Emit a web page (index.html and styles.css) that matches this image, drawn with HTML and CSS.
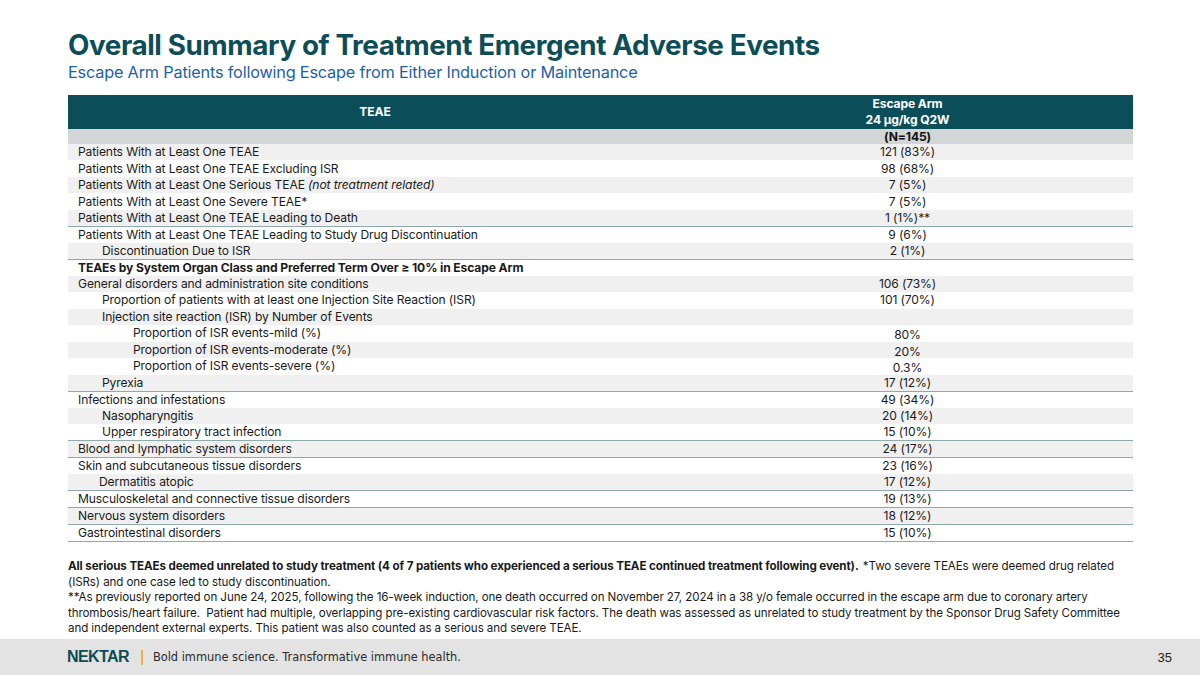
FILE: index.html
```html
<!DOCTYPE html>
<html lang="en">
<head>
<meta charset="utf-8">
<title>Overall Summary of TEAEs</title>
<link rel="stylesheet" href="styles.css">
</head>
<body>
<div class="slide">
  <header class="head">
    <h1 class="title">Overall Summary of Treatment Emergent Adverse Events</h1>
    <p class="subtitle">Escape Arm Patients following Escape from Either Induction or Maintenance</p>
  </header>

  <table class="teae">
    <thead>
      <tr class="hdr">
        <th class="c1">TEAE</th>
        <th class="c2">Escape Arm<br>24 µg/kg Q2W</th>
      </tr>
      <tr class="nrow">
        <th class="c1"></th>
        <th class="c2">(N=145)</th>
      </tr>
    </thead>
    <tbody>
      <tr class="g"><td class="c1">Patients With at Least One TEAE</td><td class="c2">121 (83%)</td></tr>
      <tr><td class="c1">Patients With at Least One TEAE Excluding ISR</td><td class="c2">98 (68%)</td></tr>
      <tr class="g"><td class="c1">Patients With at Least One Serious TEAE <em>(not treatment related)</em></td><td class="c2">7 (5%)</td></tr>
      <tr><td class="c1">Patients With at Least One Severe TEAE*</td><td class="c2">7 (5%)</td></tr>
      <tr class="g b"><td class="c1">Patients With at Least One TEAE Leading to Death</td><td class="c2">1 (1%)**</td></tr>
      <tr><td class="c1">Patients With at Least One TEAE Leading to Study Drug Discontinuation</td><td class="c2">9 (6%)</td></tr>
      <tr class="g b"><td class="c1 i1">Discontinuation Due to ISR</td><td class="c2">2 (1%)</td></tr>
      <tr><td class="c1 bold">TEAEs by System Organ Class and Preferred Term Over ≥ 10% in Escape Arm</td><td class="c2"></td></tr>
      <tr class="g"><td class="c1">General disorders and administration site conditions</td><td class="c2">106 (73%)</td></tr>
      <tr><td class="c1 i1">Proportion of patients with at least one Injection Site Reaction (ISR)</td><td class="c2">101 (70%)</td></tr>
      <tr class="g"><td class="c1 i1">Injection site reaction (ISR) by Number of Events</td><td class="c2"></td></tr>
      <tr><td class="c1 i2">Proportion of ISR events-mild (%)</td><td class="c2 low">80%</td></tr>
      <tr class="g"><td class="c1 i2">Proportion of ISR events-moderate (%)</td><td class="c2 low">20%</td></tr>
      <tr><td class="c1 i2">Proportion of ISR events-severe (%)</td><td class="c2 low">0.3%</td></tr>
      <tr class="g b"><td class="c1 i1">Pyrexia</td><td class="c2">17 (12%)</td></tr>
      <tr><td class="c1">Infections and infestations</td><td class="c2">49 (34%)</td></tr>
      <tr class="g"><td class="c1 i1">Nasopharyngitis</td><td class="c2">20 (14%)</td></tr>
      <tr class="b"><td class="c1 i1">Upper respiratory tract infection</td><td class="c2">15 (10%)</td></tr>
      <tr class="g b"><td class="c1">Blood and lymphatic system disorders</td><td class="c2">24 (17%)</td></tr>
      <tr><td class="c1">Skin and subcutaneous tissue disorders</td><td class="c2">23 (16%)</td></tr>
      <tr class="g b"><td class="c1 i1b">Dermatitis atopic</td><td class="c2">17 (12%)</td></tr>
      <tr class="b"><td class="c1">Musculoskeletal and connective tissue disorders</td><td class="c2">19 (13%)</td></tr>
      <tr class="g b"><td class="c1">Nervous system disorders</td><td class="c2">18 (12%)</td></tr>
      <tr class="b"><td class="c1">Gastrointestinal disorders</td><td class="c2">15 (10%)</td></tr>
    </tbody>
  </table>

  <div class="notes">
    <p><strong class="lead">All serious TEAEs deemed unrelated to study treatment (4 of 7 patients who experienced a serious TEAE continued treatment following event).</strong> *Two severe TEAEs were deemed drug related (ISRs) and one case led to study discontinuation.</p>
    <p>**As previously reported on June 24, 2025, following the 16-week induction, one death occurred on November 27, 2024 in a 38 y/o female occurred in the escape arm due to coronary artery thrombosis/heart failure.&nbsp; Patient had multiple, overlapping pre-existing cardiovascular risk factors. The death was assessed as unrelated to study treatment by the Sponsor Drug Safety Committee and independent external experts. This patient was also counted as a serious and severe TEAE.</p>
  </div>

  <footer class="foot">
    <div class="brand">
      <span class="logo">NEKTAR</span>
      <span class="sep"></span>
      <span class="tag">Bold immune science. Transformative immune health.</span>
    </div>
    <span class="page">35</span>
  </footer>
</div>
</body>
</html>
```

FILE: styles.css
```css
* { box-sizing: border-box; }
html, body { margin: 0; padding: 0; }
body {
  width: 1200px;
  height: 675px;
  overflow: hidden;
  background: #ffffff;
  font-family: "Inter", "Liberation Sans", sans-serif;
  color: #1a1a1a;
}
.slide {
  width: 1200px;
  height: 675px;
  display: flex;
  flex-direction: column;
}
.head {
  padding: 28px 0 0 68px;
}
.title {
  margin: 0;
  font-family: "Inter", "Liberation Sans", sans-serif;
  font-weight: 700;
  font-size: 27.8px;
  line-height: 34px;
  letter-spacing: -0.4px;
  color: #0c4d58;
}
.subtitle {
  margin: 0;
  font-family: "Inter", "Liberation Sans", sans-serif;
  font-size: 16.3px;
  line-height: 20px;
  letter-spacing: -0.2px;
  color: #1f5fa6;
}
.teae {
  margin: 13px 0 0 68px;
  width: 1065px;
  border-collapse: collapse;
  table-layout: fixed;
  font-family: "Inter", "Liberation Sans", sans-serif;
  font-size: 12.1px;
  letter-spacing: -0.12px;
}
.teae .c1 { width: 614px; text-align: left; padding: 0 0 0 10px; }
.teae .c2 { width: 451px; text-align: center; padding: 0; }
.teae th { font-weight: 700; }
.hdr th {
  background: #0b4e59;
  color: #ffffff;
  height: 34px;
  line-height: 16px;
  padding-top: 1px;
}
.hdr th.c1 { text-align: center; padding-left: 0; }
.nrow th {
  background: #d3d6d6;
  color: #111;
  height: 15px;
  line-height: 15px;
}
tbody tr { height: 16.46px; }
tbody td { line-height: 16px; padding: 0; white-space: nowrap; }
tbody tr.g td { background: #f0f0f0; }
tbody tr.b td { border-bottom: 1.5px solid #8fa9ac; }
.teae .i1 { padding-left: 34px; }
.teae .i1b { padding-left: 31px; }
.teae .i2 { padding-left: 65px; }
.teae .bold { font-weight: 700; }
.teae .low { padding-top: 3px; line-height: 13px; }
.notes {
  margin: 17px 66px 0 68px;
  font-family: "Inter", "Liberation Sans", sans-serif;
  font-size: 11.6px;
  line-height: 15.6px;
  letter-spacing: -0.1px;
  color: #1a1a1a;
}
.notes p { margin: 0; }
.notes .lead { margin-right: 1px; }
.foot {
  margin-top: auto;
  height: 36px;
  background: #e3e3e3;
  display: flex;
  align-items: center;
  justify-content: space-between;
  padding: 0 28px 0 67px;
}
.brand { display: flex; align-items: center; }
.logo {
  font-family: "Liberation Sans", "Arial", sans-serif;
  font-weight: 700;
  font-size: 16px;
  letter-spacing: -0.6px;
  color: #0d4b55;
}
.sep {
  width: 2px;
  height: 15px;
  background: #e8b24a;
  margin: 0 10px 0 12px;
}
.tag {
  font-family: "DejaVu Sans", "Verdana", sans-serif;
  font-size: 11.4px;
  color: #2a2a2a;
}
.page {
  font-family: "Liberation Sans", sans-serif;
  font-size: 13px;
  color: #222;
}
```
